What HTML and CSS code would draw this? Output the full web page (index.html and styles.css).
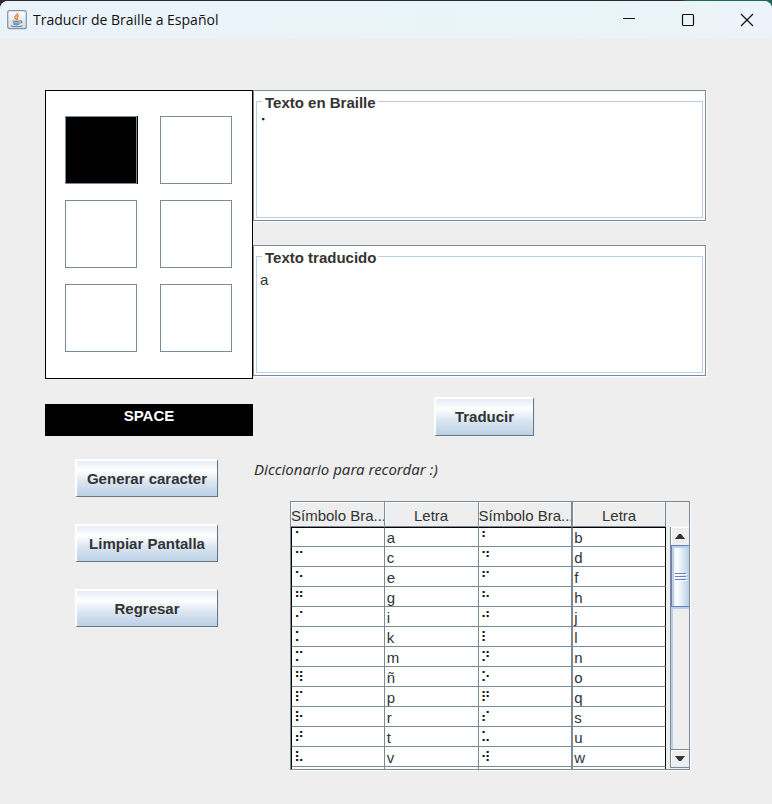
FILE: index.html
```html
<!DOCTYPE html>
<html lang="es">
<head>
<meta charset="utf-8">
<title>Traducir de Braille a Español</title>
<link rel="stylesheet" href="styles.css">
</head>
<body>
<div class="window">
  <header class="titlebar">
    <svg class="app-icon" viewBox="0 0 20 20" aria-hidden="true">
      <defs><linearGradient id="tile" x1="0" y1="0" x2="0" y2="1"><stop offset="0" stop-color="#fdfdfd"/><stop offset="1" stop-color="#d5dbe0"/></linearGradient></defs>
      <rect x=".7" y=".7" width="18.6" height="18" rx="2" fill="url(#tile)" stroke="#8094a6" stroke-width="1.2"/>
      <path d="M10.600 3c.6 1.800-3 2.700-2.800 4.300.1 1.200 1.600 1.700 1.700 2.900M12 5.500c-1.500.7-2.300 1.500-1.700 2.400.5.800.2 1.500-.3 2" fill="none" stroke="#ee8a33" stroke-width="1.500"/>
      <path d="M5.500 10.700c1.500.9 6 .9 7.500 0M6 12.600c1.500.8 5 .8 6.500 0M6.800 14.300c1.200.6 4 .6 5.200 0M4 15.700c2 1.400 9 1.400 11.500 0M13 10.800c2.500-.4 2.400 1.900.2 2.400" fill="none" stroke="#5e86a8" stroke-width="1.200"/>
    </svg>
    <h1 class="title">Traducir de Braille a Español</h1>
    <div class="controls">
      <button type="button" aria-label="Minimizar"><svg viewBox="0 0 12 12"><path d="M0 4.500h12"/></svg></button>
      <button type="button" aria-label="Maximizar"><svg viewBox="0 0 12 12"><rect x=".5" y=".5" width="11" height="11" rx="1"/></svg></button>
      <button type="button" aria-label="Cerrar"><svg viewBox="0 0 12 12"><path d="M0 0l12 12M12 0L0 12"/></svg></button>
    </div>
  </header>

  <main class="content">
    <section class="left">
      <div class="cells">
        <button type="button" class="cell on" aria-pressed="true" aria-label="Punto 1"></button>
        <button type="button" class="cell" aria-pressed="false" aria-label="Punto 4"></button>
        <button type="button" class="cell" aria-pressed="false" aria-label="Punto 2"></button>
        <button type="button" class="cell" aria-pressed="false" aria-label="Punto 5"></button>
        <button type="button" class="cell" aria-pressed="false" aria-label="Punto 3"></button>
        <button type="button" class="cell" aria-pressed="false" aria-label="Punto 6"></button>
      </div>
      <button type="button" class="space">SPACE</button>
      <div class="actions">
        <button type="button" class="btn">Generar caracter</button>
        <button type="button" class="btn">Limpiar Pantalla</button>
        <button type="button" class="btn">Regresar</button>
      </div>
    </section>

    <section class="right">
      <div class="pane">
        <fieldset>
          <legend><label for="braille">Texto en Braille</label></legend>
          <textarea id="braille" class="braille">⠁</textarea>
        </fieldset>
      </div>
      <div class="pane">
        <fieldset>
          <legend><label for="translated">Texto traducido</label></legend>
          <textarea id="translated">a</textarea>
        </fieldset>
      </div>
      <button type="button" class="btn translate">Traducir</button>
      <h2 class="caption">Diccionario para recordar :)</h2>
      <div class="dictionary">
        <div class="viewport">
          <table>
            <thead>
              <tr><th>Símbolo Bra...</th><th>Letra</th><th>Símbolo Bra...</th><th>Letra</th></tr>
            </thead>
            <tbody>
              <tr><td class="braille">⠁</td><td>a</td><td class="braille">⠃</td><td>b</td></tr>
              <tr><td class="braille">⠉</td><td>c</td><td class="braille">⠙</td><td>d</td></tr>
              <tr><td class="braille">⠑</td><td>e</td><td class="braille">⠋</td><td>f</td></tr>
              <tr><td class="braille">⠛</td><td>g</td><td class="braille">⠓</td><td>h</td></tr>
              <tr><td class="braille">⠊</td><td>i</td><td class="braille">⠚</td><td>j</td></tr>
              <tr><td class="braille">⠅</td><td>k</td><td class="braille">⠇</td><td>l</td></tr>
              <tr><td class="braille">⠍</td><td>m</td><td class="braille">⠝</td><td>n</td></tr>
              <tr><td class="braille">⠻</td><td>ñ</td><td class="braille">⠕</td><td>o</td></tr>
              <tr><td class="braille">⠏</td><td>p</td><td class="braille">⠟</td><td>q</td></tr>
              <tr><td class="braille">⠗</td><td>r</td><td class="braille">⠎</td><td>s</td></tr>
              <tr><td class="braille">⠞</td><td>t</td><td class="braille">⠥</td><td>u</td></tr>
              <tr><td class="braille">⠧</td><td>v</td><td class="braille">⠺</td><td>w</td></tr>
              <tr><td></td><td></td><td></td><td></td></tr>
            </tbody>
          </table>
        </div>
        <div class="scrollbar">
          <button type="button" class="arrow" aria-label="Subir"><svg viewBox="0 0 10 5"><path d="M0 5L4 0h2l4 5z"/></svg></button>
          <div class="track"><div class="thumb"><i></i><i></i><i></i></div></div>
          <button type="button" class="arrow" aria-label="Bajar"><svg viewBox="0 0 10 5"><path d="M0 0h10L6 5H4z"/></svg></button>
        </div>
      </div>
    </section>
  </main>
</div>
</body>
</html>
```
FILE: styles.css
```css
* { box-sizing: border-box; }

body {
  margin: 0;
  background: linear-gradient(90deg, #2b2933 0 88%, #226455 89%) top / 100% 12px no-repeat #eee;
  padding-top: 1px;
  color: #333;
  font: 15px/18px "Liberation Sans", Arial, sans-serif;
}

button, textarea { font: inherit; color: inherit; }
button { padding: 0; border: 0; }

.window { min-height: calc(100vh - 1px); border-radius: 8px 8px 0 0; background: #eee; overflow: hidden; }

.titlebar {
  display: flex;
  align-items: center;
  height: 37px;
  padding-left: 7px;
  background: linear-gradient(90deg, #ebf3fa, #e9f5f8 75%, #edf3fa);
}
.app-icon { width: 20px; height: 20px; }
.title { margin: 0 0 0 6px; color: #111; font: 14px/20px "Open Sans", "Noto Sans", sans-serif; }
.controls { display: flex; gap: 12px; margin-left: auto; padding-right: 2px; }
.controls button { width: 47px; height: 37px; background: none; }
.controls svg { display: block; width: 12px; height: 12px; margin: auto; overflow: visible; fill: none; stroke: #111; stroke-width: 1.2; }

.content { display: grid; grid-template-columns: 208px 1fr; padding: 52px 66px 34px 45px; }

.cells {
  display: grid;
  grid-template-columns: 72px 72px;
  grid-auto-rows: 68px;
  gap: 16px 23px;
  padding: 25px 19px 26px;
  border: 1px solid #000;
  background: #fff;
}
.cell { border: 1px solid #7a8a99; background: #fff; }
.cell.on { background: #000; box-shadow: 1px 0 #000; }

.space {
  display: block;
  width: 100%;
  height: 32px;
  margin-top: 25px;
  padding-bottom: 8px;
  background: #000;
  color: #fff;
  font-weight: bold;
}

.actions { display: grid; gap: 27px; margin: 23px 35px 0 30px; }
.btn {
  height: 38px;
  border: 2px solid #fff;
  border-right: 1px solid #6f7680;
  border-bottom: 1px solid #6f7680;
  background: linear-gradient(#dfe9f4, #fff 30%, #dbe6f1 60%, #b8cfe5) border-box;
  box-shadow: 1px 0 #dfe9f3;
  font-weight: bold;
}

.pane {
  height: 131px;
  padding: 2px;
  border: 1px solid #7a8a99;
  background: #fff;
  box-shadow: 1px 1px #fff;
}
.pane + .pane { margin-top: 24px; }
fieldset {
  display: flex;
  height: 100%;
  min-width: 0;
  margin: 0;
  padding: 0 2px;
  border: 1px solid #b8cfe5;
}
legend { margin-left: 3px; padding: 4px 2px 0 3px; font-weight: bold; line-height: 12px; }
textarea {
  flex: 1;
  min-width: 0;
  padding: 7px 1px 0;
  border: 0;
  outline: 0;
  background: none;
  resize: none;
}
.braille { color: #111; font-family: "DejaVu Sans", sans-serif; }

.translate { display: block; width: 100px; height: 39px; margin: 21px 0 0 181px; }

.caption { margin: 23px 0 22px 1px; font: italic 15px/20px "Noto Sans", "Open Sans", sans-serif; }

.dictionary {
  display: flex;
  height: 269px;
  margin: 0 16px 0 37px;
  border: 1px solid #7a8a99;
  box-shadow: 1px 1px #fff;
}
.viewport { flex: 1; min-width: 0; overflow: hidden; }
table { width: 100%; table-layout: fixed; border-collapse: separate; border-spacing: 0; }
th {
  height: 25px;
  padding: 3px 0 0;
  border: 1px solid #7a8a99;
  border-width: 0 1px 1px 0;
  box-shadow: inset 1px 1px #fff;
  font-weight: normal;
  line-height: 20px;
  white-space: nowrap;
  overflow: hidden;
}
td {
  height: 20px;
  padding: 2px 0 0 2px;
  border: 1px solid #7a8a99;
  border-width: 0 1px 1px 0;
  background: #fff;
  line-height: 17px;
  vertical-align: top;
}
tbody tr:first-child td { padding-top: 1px; border-top: 1px solid #000; }
td:first-child { border-left: 1px solid #000; }
td:nth-child(4), th:nth-child(4) { border-left: 1px solid #7a8a99; }
td:nth-child(4) { padding-left: 1px; }
td:last-child { border-right-color: #000; }
td.braille { font-size: 14px; }

.scrollbar { display: flex; flex-direction: column; width: 19px; margin: 25px 0 1px 4px; border-left: 1px solid #7a8a99; }
.arrow { height: 18px; background: #eee; box-shadow: inset 1px 1px #fff; }
.arrow:last-child { height: 19px; border: 1px solid #7a8a99; border-width: 1px 0; }
.arrow svg { display: block; width: 10px; height: 5px; margin: auto; fill: #333; }
.track { flex: 1; border-left: 2px solid #b8cfe5; }
.thumb {
  display: grid;
  align-content: center;
  justify-content: center;
  gap: 2px;
  height: 62px;
  margin-left: -2px;
  border: 1px solid #6382bf;
  border-right: 0;
  background: linear-gradient(90deg, #dce7f2, #fff 30%, #b8cfe5);
  box-shadow: inset 2px 2px #b8cfe5, 0 2px #b8cfe5;
}
.thumb i { width: 11px; height: 1px; background: #6382bf; box-shadow: 1px 1px #fff; }
```
